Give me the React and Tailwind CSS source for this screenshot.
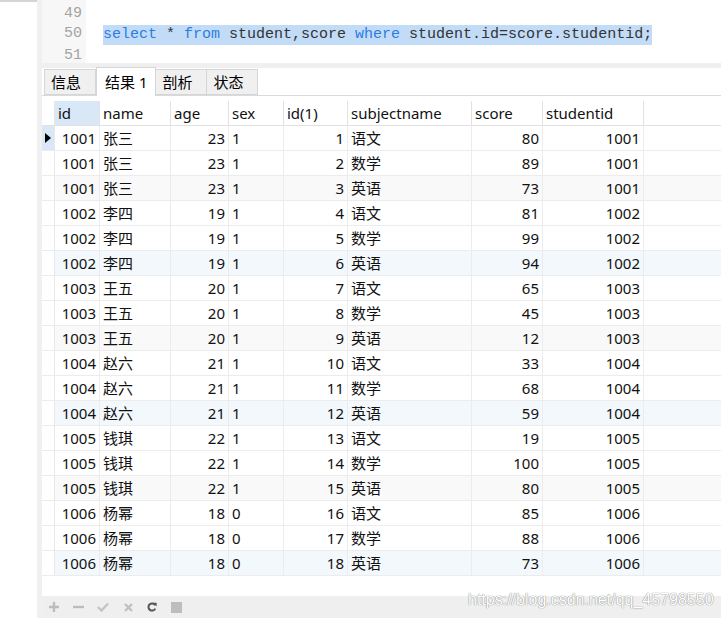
import { Fragment } from 'react'

const rows = [
    [1001, '张三', 23, 1, 1, '语文', 80, 1001],
    [1001, '张三', 23, 1, 2, '数学', 89, 1001],
    [1001, '张三', 23, 1, 3, '英语', 73, 1001],
    [1002, '李四', 19, 1, 4, '语文', 81, 1002],
    [1002, '李四', 19, 1, 5, '数学', 99, 1002],
    [1002, '李四', 19, 1, 6, '英语', 94, 1002],
    [1003, '王五', 20, 1, 7, '语文', 65, 1003],
    [1003, '王五', 20, 1, 8, '数学', 45, 1003],
    [1003, '王五', 20, 1, 9, '英语', 12, 1003],
    [1004, '赵六', 21, 1, 10, '语文', 33, 1004],
    [1004, '赵六', 21, 1, 11, '数学', 68, 1004],
    [1004, '赵六', 21, 1, 12, '英语', 59, 1004],
    [1005, '钱琪', 22, 1, 13, '语文', 19, 1005],
    [1005, '钱琪', 22, 1, 14, '数学', 100, 1005],
    [1005, '钱琪', 22, 1, 15, '英语', 80, 1005],
    [1006, '杨幂', 18, 0, 16, '语文', 85, 1006],
    [1006, '杨幂', 18, 0, 17, '数学', 88, 1006],
    [1006, '杨幂', 18, 0, 18, '英语', 73, 1006],
]

const columns = [
    { name: 'id', w: 'w-[45px]', right: true },
    { name: 'name', w: 'w-[71px]', right: false },
    { name: 'age', w: 'w-[58px]', right: true },
    { name: 'sex', w: 'w-[55px]', right: false },
    { name: 'id(1)', w: 'w-[64px]', right: true },
    { name: 'subjectname', w: 'w-[124px]', right: false },
    { name: 'score', w: 'w-[71px]', right: true },
    { name: 'studentid', w: 'w-[101px]', right: true },
]

function rowBg(i) {
    if ((i + 1) % 6 === 0) return 'bg-[#f3f8fd]'
    if ((i + 1) % 6 === 3) return 'bg-[#f9f9f9]'
    return 'bg-white'
}

function Kw({ children }) {
    return <span className="text-[#2b7de3]">{children}</span>
}

function Tab({ label, active }) {
    if (active) {
        return (
            <div className="h-[29px] -mb-px px-[8px] flex items-center bg-white border border-b-0 border-[#d6d6d6] text-[15px] text-black">
                {label}
            </div>
        )
    }
    return (
        <div className="h-[26px] w-[52px] px-[6px] flex items-center bg-[#f0f0f0] border border-[#d6d6d6] -ml-px first:ml-0 text-[15px] text-black">
            {label}
        </div>
    )
}

export default function App() {
    return (
        <div className="w-[721px] h-[618px] flex bg-white overflow-hidden font-['Noto_Sans','Noto_Sans_CJK_SC',sans-serif] text-[#111]">
            {/* Left blank pane */}
            <div className="w-[37px] flex flex-col">
                <div className="h-[2px] bg-[#d4d4d4]" />
            </div>
            <div className="w-[5px] bg-[#f0f0f0]" />

            <div className="flex-1 flex flex-col relative">
                {/* Editor */}
                <div className="h-[63px] flex font-['Liberation_Mono',monospace] text-[15px]">
                    <div className="w-[44px] bg-[#f7f7f7] pt-[4px] pr-[4px] text-right text-[#a3a3a3]">
                        <div className="h-[20px] leading-[20px]">49</div>
                        <div className="h-[20px] leading-[20px]">50</div>
                        <div className="h-[20px] leading-[21px] mt-[1px]">51</div>
                    </div>
                    <div className="flex-1 pt-[24px] pl-[17px]">
                        <div className="h-[20px] leading-[20px] inline-block bg-[#c2dcf7] text-[#333] whitespace-pre">
                            <Kw>select</Kw> * <Kw>from</Kw> student,score <Kw>where</Kw> student.id=score.studentid;
                        </div>
                    </div>
                </div>
                <div className="h-[5px] bg-[#efefef]" />

                {/* Tabs */}
                <div className="h-[28px] flex items-end pl-[2px] border-b border-[#dadada]">
                    <Tab label="信息" />
                    <Tab label="结果 1" active />
                    <Tab label="剖析" />
                    <Tab label="状态" />
                </div>

                {/* Grid */}
                <div className="flex-1 pt-[5px] text-[15px] leading-none">
                    <div className="flex h-[25px] border-b border-[#e2e2e2]">
                        <div className="w-[13px] border-r border-[#e8e8e8]" />
                        {columns.map((c, j) => (
                            <div
                                key={c.name}
                                className={`${c.w} border-r border-[#e2e2e2] pl-[3px] pt-[1px] flex items-center ${j === 0 ? 'bg-[#d9e8f7]' : 'bg-white'}`}
                            >
                                {c.name}
                            </div>
                        ))}
                    </div>
                    {rows.map((r, i) => (
                        <div key={i} className={`flex h-[25px] border-b border-[#ececec] ${rowBg(i)}`}>
                            <div className={`w-[13px] border-r border-[#e8e8e8] flex items-center justify-center ${i === 0 ? 'bg-[#d9e8f7]' : 'bg-white'}`}>
                                {i === 0 && (
                                    <svg width="6" height="10" viewBox="0 0 6 10">
                                        <path d="M0 0 L6 5 L0 10 Z" fill="#000" />
                                    </svg>
                                )}
                            </div>
                            {columns.map((c, j) => (
                                <Fragment key={j}>
                                    <div
                                        className={`${c.w} border-r border-[#ececec] pt-[1px] flex items-center ${c.right ? 'justify-end pr-[3px]' : 'pl-[3px]'}`}
                                    >
                                        {r[j]}
                                    </div>
                                </Fragment>
                            ))}
                        </div>
                    ))}
                </div>

                {/* Bottom toolbar */}
                <div className="h-[22px] bg-[#efefef] flex items-center pl-[7px]">
                    <svg width="10" height="10" viewBox="0 0 10 10" className="mr-[14px]">
                        <path d="M5 0V10M0 5H10" stroke="#bcbcbc" strokeWidth="2.4" />
                    </svg>
                    <svg width="11" height="10" viewBox="0 0 11 10" className="mr-[13px]">
                        <path d="M0 5H11" stroke="#bcbcbc" strokeWidth="2.4" />
                    </svg>
                    <svg width="12" height="10" viewBox="0 0 12 10" className="mr-[15px]">
                        <path d="M1 5L4.5 8.5L11 1.5" stroke="#c4c4c4" strokeWidth="2.4" fill="none" />
                    </svg>
                    <svg width="9" height="9" viewBox="0 0 9 9" className="mr-[14px]">
                        <path d="M1 1L8 8M8 1L1 8" stroke="#c0c0c0" strokeWidth="2.4" />
                    </svg>
                    <svg width="10" height="10" viewBox="0 0 10 10" className="mr-[14px]">
                        <path d="M8.2 3.2A3.6 3.6 0 1 0 8.3 6.6" stroke="#555" strokeWidth="2" fill="none" />
                        <path d="M6 0.8L9.6 0.8L9.6 4.4Z" fill="#555" />
                    </svg>
                    <div className="w-[11px] h-[11px] bg-[#bdbdbd]" />
                </div>

                {/* Watermark */}
                <div className="absolute left-[426px] top-[588px] font-['Liberation_Sans',sans-serif] text-[16px] leading-[24px] text-white [text-shadow:0_0_1px_#8a8a8a,0_0_1px_#8a8a8a] whitespace-nowrap">
                    https://blog.csdn.net/qq_45798550
                </div>
            </div>
        </div>
    )
}
